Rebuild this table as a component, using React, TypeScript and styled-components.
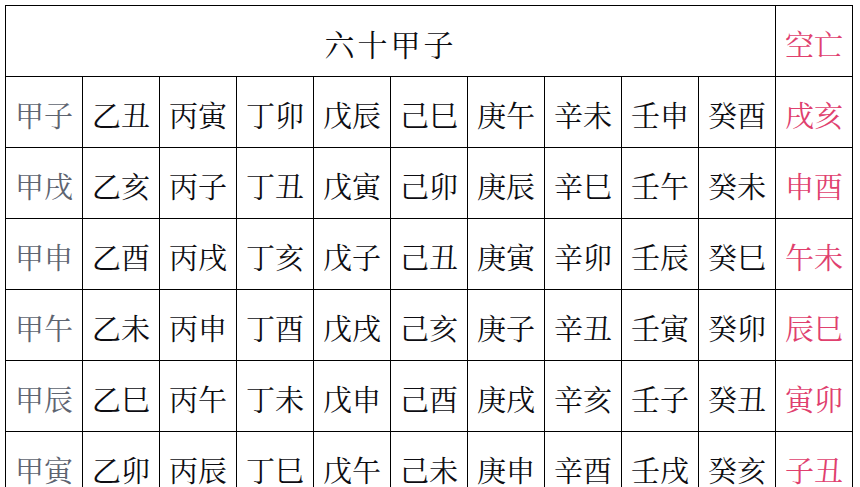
import React from 'react';
import styled, { createGlobalStyle } from 'styled-components';

const GlobalStyle = createGlobalStyle`
  html, body {
    margin: 0;
    padding: 0;
    background: #ffffff;
  }
  body {
    font-family: "Noto Serif CJK SC", "Noto Sans CJK SC", serif;
  }
`;

const rows: string[][] = [
  ['甲子', '乙丑', '丙寅', '丁卯', '戊辰', '己巳', '庚午', '辛未', '壬申', '癸酉', '戌亥'],
  ['甲戌', '乙亥', '丙子', '丁丑', '戊寅', '己卯', '庚辰', '辛巳', '壬午', '癸未', '申酉'],
  ['甲申', '乙酉', '丙戌', '丁亥', '戊子', '己丑', '庚寅', '辛卯', '壬辰', '癸巳', '午未'],
  ['甲午', '乙未', '丙申', '丁酉', '戊戌', '己亥', '庚子', '辛丑', '壬寅', '癸卯', '辰巳'],
  ['甲辰', '乙巳', '丙午', '丁未', '戊申', '己酉', '庚戌', '辛亥', '壬子', '癸丑', '寅卯'],
  ['甲寅', '乙卯', '丙辰', '丁巳', '戊午', '己未', '庚申', '辛酉', '壬戌', '癸亥', '子丑'],
];

type Tone = 'lead' | 'plain' | 'void';

const toneOf = (index: number, length: number): Tone => {
  if (index === 0) return 'lead';
  if (index === length - 1) return 'void';
  return 'plain';
};

export default function App() {
  return (
    <>
      <GlobalStyle />
      <Page>
        <Table>
          <colgroup>
            {rows[0].map((_, i) => (
              <Col key={i} />
            ))}
          </colgroup>
          <tbody>
            <Row>
              <TitleCell colSpan={10}>六十甲子</TitleCell>
              <Cell $tone="void">空亡</Cell>
            </Row>
            {rows.map((row, r) => (
              <Row key={r}>
                {row.map((name, i) => (
                  <Cell key={i} $tone={toneOf(i, row.length)}>
                    {name}
                  </Cell>
                ))}
              </Row>
            ))}
          </tbody>
        </Table>
      </Page>
    </>
  );
}

const Page = styled.div`
  padding: 5px 0 0 5px;
`;

const Table = styled.table`
  border-collapse: collapse;
  table-layout: fixed;
  width: 848px;
`;

const Col = styled.col`
  width: 77px;
`;

const Row = styled.tr`
  height: 71px;
`;

const colours: Record<Tone, string> = {
  lead: '#5e6470',
  plain: '#0d0d12',
  void: '#e0406e',
};

const Cell = styled.td<{ $tone: Tone }>`
  border: 1px solid #000;
  padding: 4px 0 0;
  text-align: center;
  vertical-align: middle;
  font-size: 29px;
  line-height: 1;
  color: ${(p) => colours[p.$tone]};
  white-space: nowrap;
`;

const TitleCell = styled.td`
  border: 1px solid #000;
  padding: 4px 0 0;
  text-align: center;
  vertical-align: middle;
  font-size: 30px;
  letter-spacing: 3px;
  color: #0d0d12;
`;
